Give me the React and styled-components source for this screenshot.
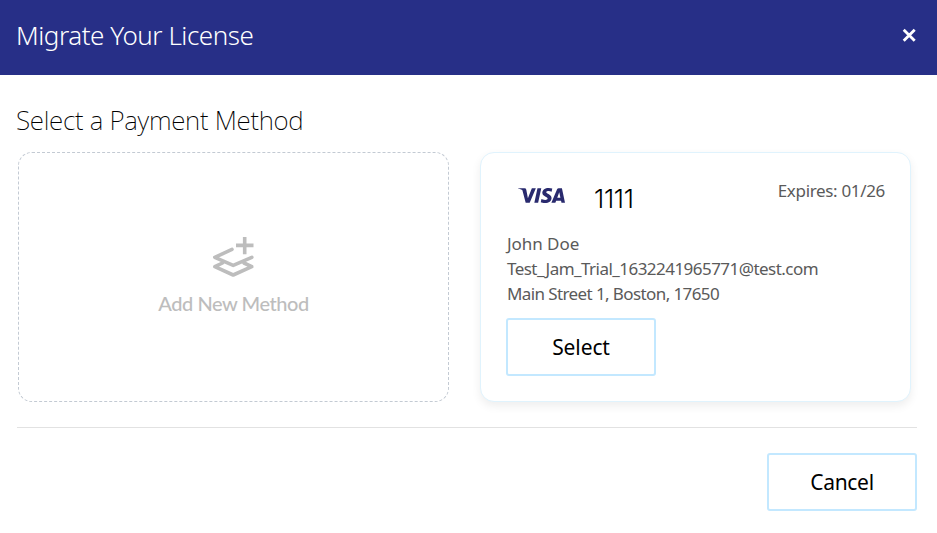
import React from 'react';
import styled, { createGlobalStyle } from 'styled-components';
import { SiVisa } from 'react-icons/si';

const GlobalStyle = createGlobalStyle`
  *, *::before, *::after { box-sizing: border-box; }
  body {
    margin: 0;
    background: #fff;
    font-family: "Noto Sans", "Open Sans", sans-serif;
    color: #000;
  }
`;

const Dialog = styled.main`
  width: 937px;
  height: 533px;
  overflow: hidden;
  background: #fff;
`;

const Header = styled.header`
  height: 75px;
  padding: 0 20px 5px 16px;
  display: flex;
  align-items: center;
  justify-content: space-between;
  background: #272f87;
  color: #fff;
`;

const Title = styled.h1`
  margin: 0;
  font-size: 26px;
  line-height: 36px;
  font-weight: 300;
  letter-spacing: -0.46px;
`;

const CloseButton = styled.button`
  width: 16px;
  height: 16px;
  padding: 0;
  border: 0;
  background: none;
  color: inherit;
  display: flex;
`;

const Body = styled.section`
  padding: 27px 20px 0 17px;
`;

const Heading = styled.h2`
  margin: 0 0 14px -1px;
  font-size: 26px;
  line-height: 36px;
  font-weight: 200;
  letter-spacing: -0.28px;
`;

const Methods = styled.div`
  display: grid;
  grid-template-columns: 431px 431px;
  gap: 31px;
  height: 250px;
  margin-left: 1px;
`;

const AddCard = styled.button`
  padding: 82px 0 0;
  border: 1px dashed #c3cad3;
  border-radius: 14px;
  background: #fff;
  color: #bdbdbd;
  display: flex;
  flex-direction: column;
  align-items: center;
  gap: 14px;
`;

const AddLabel = styled.span`
  font-family: Lato, sans-serif;
  font-size: 20px;
  line-height: 24px;
  font-weight: 500;
  letter-spacing: -0.45px;
`;

const SavedCard = styled.article`
  padding: 25px 25px 0;
  border: 1px solid #e0f3fd;
  border-radius: 14px;
  background: #fff;
  box-shadow: 0 4px 10px rgba(0, 0, 0, 0.07);
`;

const CardTop = styled.div`
  display: flex;
  align-items: flex-start;
  height: 53px;
`;

const VisaMark = styled(SiVisa)`
  margin: -6px 0 0 12px;
  width: 47px;
  height: 47px;
  color: #292a6e;
`;

const Digits = styled.span`
  margin: 5px 0 0 29px;
  font-family: Inter, sans-serif;
  font-size: 26px;
  line-height: 32px;
  font-weight: 300;
  letter-spacing: -0.3px;
`;

const Detail = styled.div`
  padding-left: 1px;
  font-size: 17px;
  line-height: 25px;
  color: #5a5a5a;
  white-space: nowrap;
  letter-spacing: ${(p) => p.$tracking}px;
`;

const Expiry = styled(Detail)`
  margin-left: auto;
`;

const ActionButton = styled.button`
  width: 150px;
  height: 58px;
  padding: 0;
  border: 2px solid #c3e8ff;
  border-radius: 3px;
  background: #fff;
  color: #000;
  font: 400 21px "Noto Sans", sans-serif;
  letter-spacing: ${(p) => p.$tracking}px;
`;

const SelectRow = styled.div`
  margin-top: 12px;
`;

const Footer = styled.footer`
  margin-top: 25px;
  padding-top: 25px;
  border-top: 1px solid #e2e2e2;
  display: flex;
  justify-content: flex-end;
`;

const LayersPlusIcon = () => (
  <svg width="43" height="42" viewBox="0 0 43 42" fill="none" stroke="currentColor" strokeWidth="3.6" strokeLinecap="round" strokeLinejoin="round">
    <path d="M20 14.4 2.8 22.3 21.2 30.4 39.8 22.3" />
    <path d="M10.5 28 2.8 31.7 21.2 40 39.8 31.7 32 28" />
    <path d="M32.7 2V19.3M24 10.4H41.5" strokeLinecap="butt" />
  </svg>
);

const CloseIcon = () => (
  <svg width="16" height="16" viewBox="0 0 16 16" fill="none" stroke="currentColor" strokeWidth="2.8">
    <path d="M2.7 2.7 13.7 13.7M13.7 2.7 2.7 13.7" />
  </svg>
);

const details = [
  { text: 'John Doe', tracking: -0.05 },
  { text: 'Test_Jam_Trial_1632241965771@test.com', tracking: -0.54 },
  { text: 'Main Street 1, Boston, 17650', tracking: -0.6 },
];

export default function App() {
  return (
    <Dialog>
      <GlobalStyle />
      <Header>
        <Title>Migrate Your License</Title>
        <CloseButton aria-label="Close"><CloseIcon /></CloseButton>
      </Header>
      <Body>
        <Heading>Select a Payment Method</Heading>
        <Methods>
          <AddCard>
            <LayersPlusIcon />
            <AddLabel>Add New Method</AddLabel>
          </AddCard>
          <SavedCard>
            <CardTop>
              <VisaMark />
              <Digits>1111</Digits>
              <Expiry $tracking={-0.33}>Expires: 01/26</Expiry>
            </CardTop>
            {details.map((d) => (
              <Detail key={d.text} $tracking={d.tracking}>{d.text}</Detail>
            ))}
            <SelectRow>
              <ActionButton $tracking={-0.1}>Select</ActionButton>
            </SelectRow>
          </SavedCard>
        </Methods>
        <Footer>
          <ActionButton $tracking={-0.3}>Cancel</ActionButton>
        </Footer>
      </Body>
    </Dialog>
  );
}
